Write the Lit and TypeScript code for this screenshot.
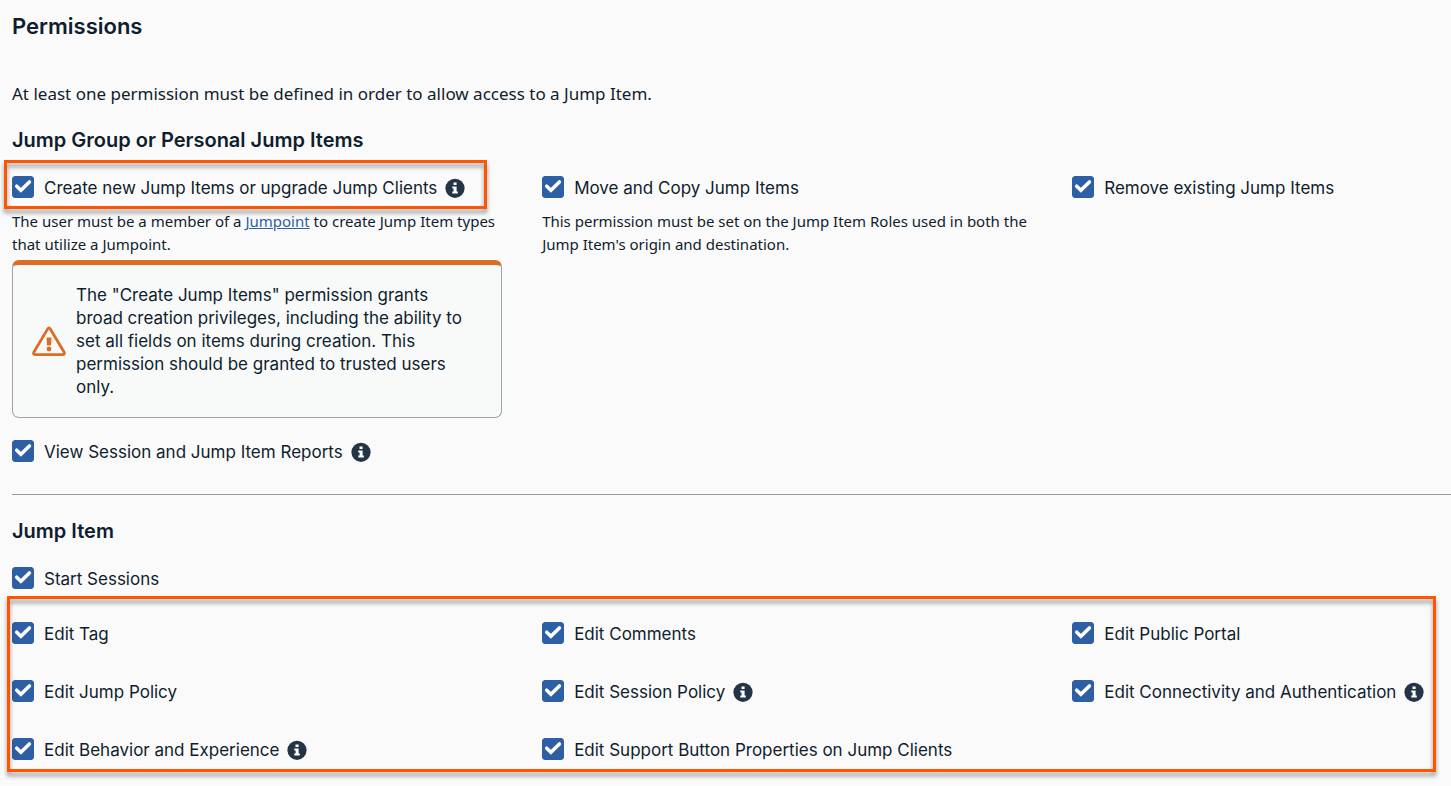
import { LitElement, html, css, svg, nothing } from "lit";
import { customElement, property } from "lit/decorators.js";

@customElement("permission-option")
class PermissionOption extends LitElement {
  @property() label = "";
  @property({ type: Boolean }) info = false;

  static styles = css`
    :host {
      display: block;
      width: fit-content;
    }
    .row {
      display: flex;
      align-items: center;
      height: 24px;
      white-space: nowrap;
    }
    .tick {
      display: grid;
      width: 22px;
      height: 22px;
      margin-right: 10px;
      margin-bottom: 2px;
    }
    .box,
    .mark {
      grid-area: 1 / 1;
      width: 22px;
      height: 22px;
    }
    .box {
      appearance: none;
      margin: 0;
      border: 1px solid #2e5fa4;
      border-radius: 3px;
      background: #fff;
    }
    .box:checked {
      background: #2e5fa4;
    }
    .mark {
      pointer-events: none;
    }
    .text {
      font-size: 17px;
      line-height: 24px;
    }
    .info {
      display: block;
      width: 20px;
      height: 20px;
      margin-left: 8px;
      padding: 0;
      border: 0;
      background: none;
    }
    .glyph {
      display: block;
      width: 20px;
      height: 20px;
    }
  `;

  render() {
    return html`<div class="row">
      <span class="tick">
        <input class="box" id="box" type="checkbox" checked />
        <svg class="mark" viewBox="0 0 22 22" aria-hidden="true">
          <path d="M4.7 10.2 L8.9 14.3 L17.4 5.9" fill="none" stroke="#fff" stroke-width="3.5" stroke-linecap="round" stroke-linejoin="miter" />
        </svg>
      </span>
      <label class="text" for="box">${this.label}</label>
      ${this.info
        ? html`<button class="info" type="button" aria-label="More information">
            <svg class="glyph" viewBox="0 0 20 20" aria-hidden="true">
              <circle cx="10" cy="10.3" r="9.6" fill="#243447" />
              <path d="M8.5 4.4h3.1v2.7H8.5z M7.3 8.5h4.3v5.1h1.2v1.9H7.3v-1.9h1.3v-3.2H7.3z" fill="#fff" />
            </svg>
          </button>`
        : nothing}
    </div>`;
  }
}

const warningIcon = svg`
  <path d="M15.7 2.9 Q17 0.8 18.3 2.9 L32.2 26.3 Q33 28.6 30.8 28.6 H3.2 Q1 28.6 1.8 26.3 Z" fill="none" stroke="#dc6d27" stroke-width="2.8" stroke-linejoin="round" />
  <path d="M14.5 11.4h5l-.6 8.2h-3.8z" fill="#dc6d27" />
  <circle cx="17" cy="23" r="2.4" fill="#dc6d27" />
`;

@customElement("app-root")
class AppRoot extends LitElement {
  static styles = css`
    :host {
      display: block;
      min-height: 100vh;
      box-sizing: border-box;
      padding: 12px 0 12px 12px;
      background: #fafafa;
      color: #0f1d2e;
      font-family: Inter, sans-serif;
      overflow-x: hidden;
    }
    .title,
    .heading {
      margin: 0;
      font-weight: 600;
      line-height: 28px;
    }
    .title {
      font-size: 22px;
    }
    .heading {
      font-size: 20px;
    }
    .intro {
      margin: 42px 0 20px;
      font: 17px/24px "Noto Sans", sans-serif;
    }
    .columns {
      display: grid;
      grid-template-columns: minmax(0, 22fr) minmax(0, 22fr) minmax(0, 17fr);
      column-gap: 40px;
      row-gap: 34px;
    }
    .group {
      margin-top: 22px;
      row-gap: 22px;
    }
    .note {
      margin: 10px 0 0;
      font: 15px/23px "Noto Sans", sans-serif;
    }
    .link {
      color: #2e5fa4;
    }
    .alert {
      display: flex;
      align-items: center;
      gap: 10px;
      margin-top: 4px;
      padding: 19px 28px 18px 19px;
      border: 1px solid #9aa3ae;
      border-top: 5px solid #dc6d27;
      border-radius: 7px;
      background: #f8faf9;
    }
    .warning {
      flex: none;
      width: 34px;
      height: 31px;
    }
    .message {
      margin: 0;
      font-size: 17px;
      line-height: 23px;
    }
    .rule {
      height: 0;
      margin: 30px 0 22px;
      border: 0;
      border-top: 1px solid #9a9a9a;
    }
    .start {
      margin: 22px 0 31px;
    }
    .marked {
      position: relative;
      width: fit-content;
    }
    .marked.wide {
      width: auto;
    }
    .marked::after {
      content: "";
      position: absolute;
      inset: -16px -22px -9px -8px;
      border: 3px solid #ff5500;
      filter: drop-shadow(0 4px 2px rgba(0, 0, 0, 0.4));
      pointer-events: none;
    }
    .marked.wide::after {
      inset: -26px 15px -10px -5px;
    }
  `;

  render() {
    return html`
      <h1 class="title">Permissions</h1>
      <p class="intro">At least one permission must be defined in order to allow access to a Jump Item.</p>

      <h2 class="heading">Jump Group or Personal Jump Items</h2>
      <div class="columns group">
        <div>
          <div class="marked">
            <permission-option label="Create new Jump Items or upgrade Jump Clients" info></permission-option>
          </div>
          <p class="note">The user must be a member of a <a class="link" href="#jumpoint">Jumpoint</a> to create Jump Item types that utilize a Jumpoint.</p>
          <div class="alert" role="note">
            <svg class="warning" viewBox="0 0 34 31" aria-hidden="true">${warningIcon}</svg>
            <p class="message">The "Create Jump Items" permission grants broad creation privileges, including the ability to set all fields on items during creation. This permission should be granted to trusted users only.</p>
          </div>
        </div>
        <div>
          <permission-option label="Move and Copy Jump Items"></permission-option>
          <p class="note">This permission must be set on the Jump Item Roles used in both the Jump Item's origin and destination.</p>
        </div>
        <permission-option label="Remove existing Jump Items"></permission-option>
        <permission-option label="View Session and Jump Item Reports" info></permission-option>
      </div>

      <hr class="rule" />

      <h2 class="heading">Jump Item</h2>
      <div class="start">
        <permission-option label="Start Sessions"></permission-option>
      </div>
      <div class="marked wide">
        <div class="columns">
          <permission-option label="Edit Tag"></permission-option>
          <permission-option label="Edit Comments"></permission-option>
          <permission-option label="Edit Public Portal"></permission-option>
          <permission-option label="Edit Jump Policy"></permission-option>
          <permission-option label="Edit Session Policy" info></permission-option>
          <permission-option label="Edit Connectivity and Authentication" info></permission-option>
          <permission-option label="Edit Behavior and Experience" info></permission-option>
          <permission-option label="Edit Support Button Properties on Jump Clients"></permission-option>
        </div>
      </div>
    `;
  }
}
